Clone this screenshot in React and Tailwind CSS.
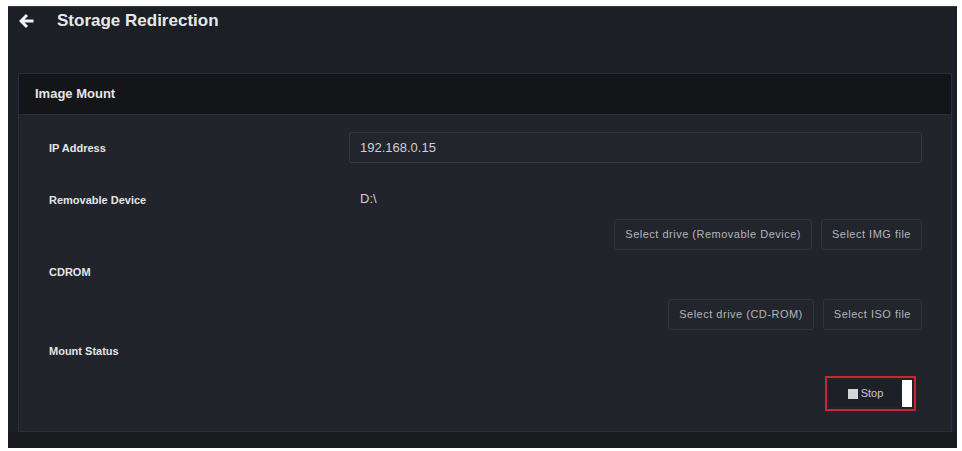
import React from "react";

function Btn({ children }) {
  return (
    <div className="h-[31px] px-[10px] flex items-center rounded-[3px] border border-[#30333a] bg-[#22252c] text-[11px] text-[#b4b6ba] tracking-[0.5px]">
      {children}
    </div>
  );
}

function Label({ children }) {
  return (
    <div className="w-[300px] text-[11px] font-bold text-[#e4e5e7] pt-[2px]">{children}</div>
  );
}

export default function App() {
  return (
    <div
      className="w-[962px] h-[451px] bg-white pt-[6px] pl-[8px] pr-[5px] overflow-hidden"
      style={{ fontFamily: '"Liberation Sans", Arial, sans-serif' }}
    >
      <div className="h-[442px] bg-[#1c1f25] border-t border-[#3a3d42] flex flex-col">
        <div className="h-[66px] flex items-start pt-[4px] pl-[11px]">
          <svg width="16" height="16" viewBox="0 0 16 16" className="mt-[2px]">
            <path d="M8 2 L2 8 L8 14 M2.5 8 H14.5" stroke="#f2f2f2" strokeWidth="3" fill="none" strokeLinejoin="miter" />
          </svg>
          <div className="ml-[22px] text-[17px] font-bold text-[#e8e8e8] leading-[20px]">
            Storage Redirection
          </div>
        </div>
        <div className="ml-[10px] mr-[5px] border border-[#2c2f35] flex flex-col">
          <div className="h-[41px] bg-[#131519] border-b border-[#2a2d33] flex items-center pl-[16px] text-[13px] font-bold text-[#e4e5e7]">
            Image Mount
          </div>
          <div className="bg-[#21242b] flex flex-col pl-[30px] pr-[29px] pb-[20px]">
            <div className="mt-[17px] h-[31px] flex items-center">
              <Label>IP Address</Label>
              <div className="flex-1 h-[31px] border border-[#34373e] rounded-[2px] bg-[#22252c] flex items-center pl-[10px] text-[13px] text-[#cfd0d2]">
                192.168.0.15
              </div>
            </div>
            <div className="mt-[21px] h-[30px] flex items-center">
              <Label>Removable Device</Label>
              <div className="pl-[11px] text-[13px] text-[#cfd0d2]">D:\</div>
            </div>
            <div className="mt-[5px] flex justify-end gap-[9px]">
              <Btn>Select drive (Removable Device)</Btn>
              <Btn>Select IMG file</Btn>
            </div>
            <div className="mt-[6px] h-[30px] flex items-center">
              <Label>CDROM</Label>
            </div>
            <div className="mt-[13px] flex justify-end gap-[9px]">
              <Btn>Select drive (CD-ROM)</Btn>
              <Btn>Select ISO file</Btn>
            </div>
            <div className="mt-[5px] h-[30px] flex items-center">
              <Label>Mount Status</Label>
            </div>
            <div className="mt-[11px] flex justify-end pr-[6px]">
              <div className="h-[35px] w-[91px] border-2 border-[#c8282d] flex items-stretch p-[2px]">
                <div className="flex-1 bg-[#1d2026] flex items-center justify-center gap-[3px] text-[11px] text-[#c9cacc]">
                  <span className="w-[10px] h-[10px] bg-[#d4d5d7] inline-block"></span>
                  <span>Stop</span>
                </div>
                <div className="w-[10px] bg-white"></div>
              </div>
            </div>
          </div>
        </div>
        <div className="flex-1 bg-[#191b1f]"></div>
      </div>
    </div>
  );
}
